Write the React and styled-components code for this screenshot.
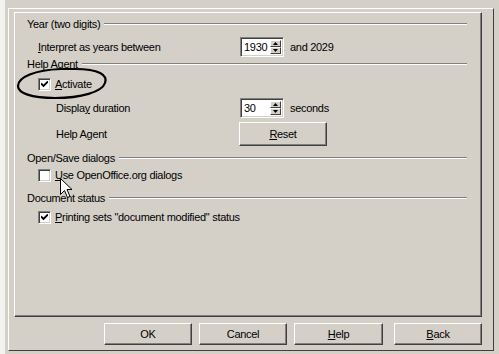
import React from 'react';
import styled, { createGlobalStyle } from 'styled-components';

const GlobalStyle = createGlobalStyle`
  html, body {
    margin: 0;
    padding: 0;
    background: #d4d0c8;
  }
  body {
    font-family: "Liberation Sans", Arial, sans-serif;
    font-size: 11px;
    letter-spacing: -0.3px;
    color: #000;
  }
`;

const Check = () => (
  <svg width="7" height="7" viewBox="0 0 7 7">
    <path d="M0 2.5 L2.5 5 L7 0.5" fill="none" stroke="#000" strokeWidth="1.9" />
  </svg>
);

const Arrow = ({ up }) => (
  <svg width="5" height="3" viewBox="0 0 5 3">
    <path d={up ? 'M2.5 0 L5 3 L0 3 Z' : 'M0 0 L5 0 L2.5 3 Z'} fill="#000" />
  </svg>
);

const SpinBox = ({ value }) => (
  <Spin>
    <SpinValue>{value}</SpinValue>
    <SpinButtons>
      <SpinHalf><Arrow up /></SpinHalf>
      <SpinHalf><Arrow /></SpinHalf>
    </SpinButtons>
  </Spin>
);

const CheckItem = ({ checked, children, $mt }) => (
  <CheckRow $mt={$mt}>
    <Box>{checked && <Check />}</Box>
    <CheckText>{children}</CheckText>
  </CheckRow>
);

const Section = ({ title, $mt }) => (
  <Header $mt={$mt}>
    <span>{title}</span>
    <Line />
  </Header>
);

const App = () => {
  return (
    <Window>
      <GlobalStyle />
      <Frame>
        <Panel>
          <Section title="Year (two digits)" $mt={2} />
          <Row $mt={6} $h={20}>
            <Label $indent={11}><u>I</u>nterpret as years between</Label>
            <Controls>
              <SpinBox value="1930" />
              <After>and 2029</After>
            </Controls>
          </Row>
          <Section title="Help Agent" $mt={0} />
          <CheckItem checked $mt={5}><u>A</u>ctivate</CheckItem>
          <Row $mt={6} $h={20}>
            <Label $indent={29}>Displa<u>y</u> duration</Label>
            <Controls>
              <SpinBox value="30" />
              <After>seconds</After>
            </Controls>
          </Row>
          <Row $mt={4} $h={24}>
            <Label $indent={29}>Help Agent</Label>
            <Controls>
              <Button $w={88} $h={24} $shift={-1}><u>R</u>eset</Button>
            </Controls>
          </Row>
          <Section title="Open/Save dialogs" $mt={5} />
          <CheckItem $mt={2}><u>U</u>se OpenOffice.org dialogs</CheckItem>
          <Section title="Document status" $mt={8} />
          <CheckItem checked $mt={4}><u>P</u>rinting sets "document modified" status</CheckItem>
        </Panel>
        <Footer>
          <Button $w={88} $h={22}>OK</Button>
          <Button $w={88} $h={22}>Cancel</Button>
          <Button $w={89} $h={22}><u>H</u>elp</Button>
          <Button $w={88} $h={22} $spaced><u>B</u>ack</Button>
        </Footer>
      </Frame>

      <Ellipse width="94" height="36" viewBox="0 0 94 36">
        <path
          d="M60 4 C84 4 93 10 90 18 C87 27 66 33 40 33 C16 33 3 28 3 21 C3 12 20 5 46 4 C52 4 56 4 60 4"
          fill="none"
          stroke="#000"
          strokeWidth="2.2"
        />
      </Ellipse>

      <Cursor width="13" height="21" viewBox="0 0 13 21">
        <path
          d="M0.5 0.5 L0.5 16.5 L4.5 12.5 L7.5 19.5 L10 18.5 L7 11.5 L12 11.5 Z"
          fill="#fff"
          stroke="#000"
          strokeWidth="1"
        />
      </Cursor>
    </Window>
  );
};

export default App;

const Window = styled.div`
  position: relative;
  width: 499px;
  height: 354px;
  box-sizing: border-box;
  padding: 8px 5px 3px 8px;
  overflow: hidden;
  background: linear-gradient(to right, #f4f3f0 0, #f4f3f0 5px, #d4d0c8 5px);
`;

const Frame = styled.div`
  height: 100%;
  box-sizing: border-box;
  background: #d4d0c8;
  border: 1px solid;
  border-color: #fff #404040 #404040 #fff;
  padding: 3px 0 0 5px;
`;

const Panel = styled.div`
  width: 468px;
  height: 305px;
  box-sizing: border-box;
  border: 1px solid;
  border-color: #fff #404040 #404040 #fff;
  box-shadow: inset -1px -1px 0 #808080;
  padding: 2px 14px 0 12px;
  display: flex;
  flex-direction: column;
`;

const Header = styled.div`
  display: flex;
  align-items: center;
  height: 14px;
  margin-top: ${p => p.$mt || 0}px;
`;

const Line = styled.div`
  flex: 1;
  height: 0;
  margin-left: 4px;
  border-top: 1px solid #808080;
  border-bottom: 1px solid #fff;
`;

const Row = styled.div`
  display: grid;
  grid-template-columns: 213px auto;
  align-items: center;
  height: ${p => p.$h}px;
  margin-top: ${p => p.$mt || 0}px;
`;

const Label = styled.div`
  padding-left: ${p => p.$indent}px;
  white-space: nowrap;
`;

const Controls = styled.div`
  display: flex;
  align-items: center;
`;

const After = styled.span`
  margin-left: 6px;
`;

const Spin = styled.div`
  display: flex;
  width: 44px;
  height: 20px;
  box-sizing: border-box;
  background: #fff;
  border: 1px solid;
  border-color: #808080 #fff #fff #808080;
  box-shadow: inset 1px 1px 0 #404040, inset -1px -1px 0 #d4d0c8;
  padding: 2px;
`;

const SpinValue = styled.div`
  flex: 1;
  padding-left: 1px;
  line-height: 14px;
`;

const SpinButtons = styled.div`
  display: flex;
  flex-direction: column;
  width: 11px;
`;

const SpinHalf = styled.div`
  flex: 1;
  display: flex;
  align-items: center;
  justify-content: center;
  background: #d4d0c8;
  box-sizing: border-box;
  border: 1px solid;
  border-color: #fff #404040 #404040 #fff;
`;

const CheckRow = styled.div`
  display: flex;
  align-items: center;
  height: 16px;
  padding-left: 11px;
  margin-top: ${p => p.$mt || 0}px;
`;

const Box = styled.div`
  width: 13px;
  height: 13px;
  box-sizing: border-box;
  background: #fff;
  border: 1px solid;
  border-color: #808080 #fff #fff #808080;
  box-shadow: inset 1px 1px 0 #404040, inset -1px -1px 0 #d4d0c8;
  display: flex;
  align-items: center;
  justify-content: center;
`;

const CheckText = styled.span`
  margin-left: 4px;
  white-space: nowrap;
`;

const Footer = styled.div`
  width: 468px;
  display: flex;
  justify-content: flex-end;
  gap: 7px;
  margin-top: 6px;
`;

const Button = styled.button`
  width: ${p => p.$w}px;
  height: ${p => p.$h}px;
  margin-left: ${p => (p.$spaced ? 4 : p.$shift || 0)}px;
  box-sizing: border-box;
  padding: 0;
  background: #d4d0c8;
  font-family: "Liberation Sans", Arial, sans-serif;
  font-size: 11px;
  letter-spacing: -0.3px;
  color: #000;
  border: 1px solid;
  border-color: #fff #404040 #404040 #fff;
  box-shadow: inset -1px -1px 0 #808080;
`;

const Ellipse = styled.svg`
  position: absolute;
  left: 15px;
  top: 65px;
`;

const Cursor = styled.svg`
  position: absolute;
  left: 60px;
  top: 178px;
`;
